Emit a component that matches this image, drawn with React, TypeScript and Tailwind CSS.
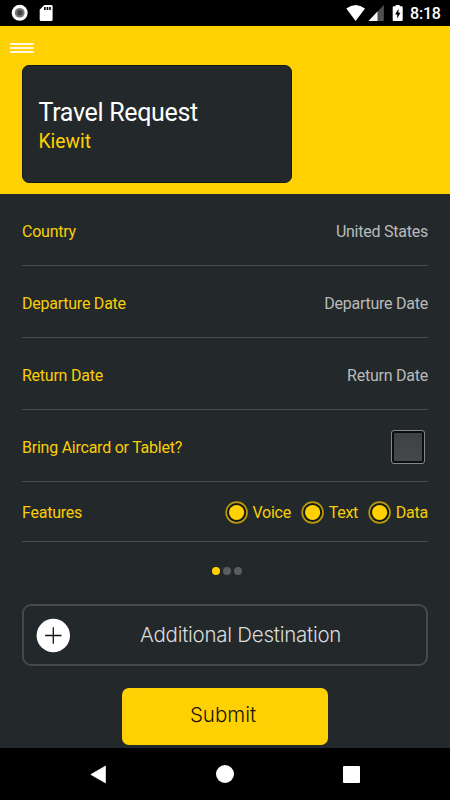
import type { ReactNode } from "react";

function StatusBar() {
  return (
    <div className="flex h-[26px] items-center justify-between bg-black pl-[11px] pr-[9px] text-white">
      <div className="flex items-center gap-[10px]">
        <svg width="18" height="18" viewBox="0 0 18 18">
          <circle cx="8.7" cy="8.8" r="8" fill="#fff" />
          <circle cx="8.7" cy="8.8" r="4.9" fill="#777" />
          <circle cx="8.7" cy="8.8" r="2.7" fill="#444" />
        </svg>
        <svg width="14" height="18" viewBox="0 0 14 18">
          <path d="M5.3 1H12.300q1.300 0 1.300 1.300V15.700Q13.600 17 12.300 17H2Q.7 17 .7 15.700V5.700Z" fill="#fff" />
          <path d="M5.900 3v3M8.500 3v3M11 3v3" stroke="#000" strokeWidth="1.600" />
        </svg>
      </div>
      <div className="flex items-center">
        <svg width="20" height="18" viewBox="0 0 20 18">
          <path d="M1.300 4.500Q10.600-2.500 20 4.500L10.600 17Z" fill="#fff" />
        </svg>
        <svg className="ml-[3px]" width="16" height="18" viewBox="0 0 16 18">
          <path d="M15.800 1v16H0.500Z" fill="#505050" />
          <path d="M9.500 7.600V17H0.500Z" fill="#fff" />
        </svg>
        <svg className="ml-[8px]" width="12" height="18" viewBox="0 0 12 18">
          <path d="M3.700 1h4v1.200H9.500Q10.700 2.200 10.700 3.200V16Q10.700 17 9.500 17H1.900Q.7 17 .7 16V3.200Q.7 2.200 1.900 2.200H3.700Z" fill="#fff" />
          <path d="M6.500 4.700L3.100 10.600H5.200V14.600L8.500 8.800H6.500Z" fill="#000" />
        </svg>
        <span className="ml-[6px] w-[31px] whitespace-nowrap pt-[2px] text-[16px] font-medium leading-[24px] tracking-[-0.2px]">8:18</span>
      </div>
    </div>
  );
}

function Row({ label, children, short }: { label: string; children: ReactNode; short?: boolean }) {
  return (
    <div className={`flex items-center justify-between border-b border-[#4b4b4b] text-[16px] tracking-[-0.24px] ${short ? "h-[60px] pt-[1px]" : "h-[72px] pt-[2px]"}`}>
      <span className="whitespace-nowrap pt-[2px] text-[#f8ce08]">{label}</span>
      {children}
    </div>
  );
}

function Feature({ name }: { name: string }) {
  return (
    <div className="flex items-center gap-[4.500px]">
      <svg width="23" height="23" viewBox="0 0 23 23">
        <circle cx="11.600" cy="11.500" r="10.400" fill="#111818" stroke="#b99a0b" strokeWidth="1.700" />
        <circle cx="11.600" cy="11.500" r="7.600" fill="#ffd103" />
      </svg>
      <span className="whitespace-nowrap pt-[2px] text-[#f8ce08]">{name}</span>
    </div>
  );
}

export default function App() {
  return (
    <div className="flex h-[800px] w-[450px] flex-col overflow-hidden bg-[#23282a] font-['Roboto',sans-serif]">
      <StatusBar />
      <header className="h-[168px] bg-[#ffd103] pt-[17px]">
        <button aria-label="Menu" className="ml-[10px] flex w-6 flex-col gap-[2px]">
          <span className="h-[2px] w-full bg-[#fff8dc]" />
          <span className="h-[2px] w-full bg-[#fff8dc]" />
          <span className="h-[2px] w-full bg-[#fff8dc]" />
        </button>
        <div className="ml-[22px] mt-[12px] h-[118px] w-[270px] rounded-[7px] border border-[#15191b] bg-[#23282a] pl-[15.500px] pt-[32px]">
          <h1 className="text-[25px] leading-[30px] tracking-[-0.320px] text-white">Travel Request</h1>
          <p className="text-[19.300px] leading-[28px] text-[#ffd103]">Kiewit</p>
        </div>
      </header>
      <main className="flex h-[554px] flex-col px-[22px]">
        <Row label="Country"><span className="pt-[2px] text-[#b9bbbb]">United States</span></Row>
        <Row label="Departure Date"><span className="pt-[2px] text-[#b9bbbb]">Departure Date</span></Row>
        <Row label="Return Date"><span className="pt-[2px] text-[#b9bbbb]">Return Date</span></Row>
        <Row label="Bring Aircard or Tablet?">
          <span className="mr-[3px] h-[34px] w-[34px] rounded-[3px] border border-[#858788] bg-[#0b0d0e] p-[2px]">
            <span className="block h-full w-full bg-linear-to-b from-[#3d4143] to-[#46494a]" />
          </span>
        </Row>
        <Row label="Features" short>
          <div className="flex items-center gap-[10.200px]">
            <Feature name="Voice" />
            <Feature name="Text" />
            <Feature name="Data" />
          </div>
        </Row>
        <div className="mt-[25px] flex justify-center gap-[3px] pl-[3px]">
          <i className="h-2 w-2 rounded-full bg-[#ffd103]" />
          <i className="h-2 w-2 rounded-full bg-[#5b5c5d]" />
          <i className="h-2 w-2 rounded-full bg-[#5b5c5d]" />
        </div>
        <button className="mt-[29px] flex h-[62px] w-full shrink-0 items-center rounded-[9px] border-2 border-[#474849] pl-[12px] font-['Inter',sans-serif]">
          <svg width="35" height="35" viewBox="0 0 35 35">
            <circle cx="17.300" cy="17.500" r="16.700" fill="#fff" />
            <path d="M9.100 17.500h16.400M17.300 9.300v16.400" stroke="#111" strokeWidth="1.300" />
          </svg>
          <span className="ml-[69px] whitespace-nowrap text-[20.500px] font-light tracking-[-0.250px] text-[#dadcdc]">Additional Destination</span>
        </button>
        <button className="ml-[100px] mt-[22px] h-[57px] w-[206px] shrink-0 rounded-[7px] bg-[#ffd103] pb-[3px] pr-[4px] font-['Inter',sans-serif] text-[20.500px] font-light text-[#151506]">Submit</button>
      </main>
      <nav className="flex flex-1 items-center justify-between bg-black pl-[90px] pr-[90px]">
        <svg width="16" height="19" viewBox="0 0 16 19"><path d="M15.500 1v17L.8 9.500Z" fill="#fff" stroke="#fff" strokeWidth=".6" strokeLinejoin="round" /></svg>
        <span className="h-[18px] w-[18px] rounded-full bg-white" />
        <span className="h-[17px] w-[17px] rounded-[1px] bg-white" />
      </nav>
    </div>
  );
}
